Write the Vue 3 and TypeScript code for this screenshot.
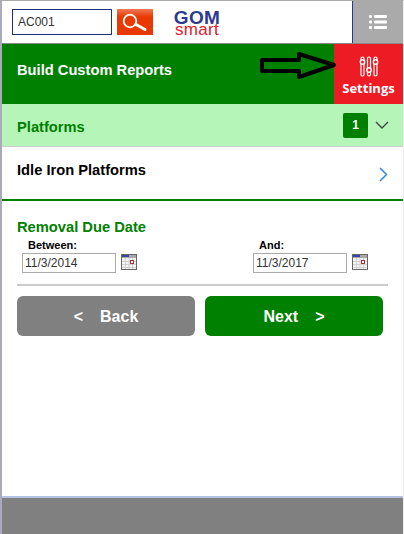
<script setup lang="ts">
interface DateField {
  label: string;
  value: string;
}

const dates: DateField[] = [
  { label: "Between:", value: "11/3/2014" },
  { label: "And:", value: "11/3/2017" },
];
</script>

<template>
  <div class="page">
    <header class="topbar">
      <input class="search-input" type="text" value="AC001" aria-label="Search" />
      <button class="search-btn" aria-label="Search">
        <svg width="26" height="22" viewBox="0 0 26 22" fill="none" aria-hidden="true">
          <circle cx="8" cy="10" r="6.3" stroke="#fff" stroke-width="1.8" />
          <path d="M14 13.5l9 5" stroke="#fff" stroke-width="3" stroke-linecap="round" />
        </svg>
      </button>
      <div class="logo">
        <span class="logo-gom">GOM</span>
        <span class="logo-smart">smart</span>
      </div>
      <button class="menu-btn" aria-label="Menu">
        <svg width="18" height="16" viewBox="0 0 18 16" fill="#fff" aria-hidden="true">
          <rect x="0" y="1" width="3" height="3" rx="1" />
          <rect x="5" y="1" width="13" height="3" rx="1" />
          <rect x="0" y="6.5" width="3" height="3" rx="1" />
          <rect x="5" y="6.5" width="13" height="3" rx="1" />
          <rect x="0" y="12" width="3" height="3" rx="1" />
          <rect x="5" y="12" width="13" height="3" rx="1" />
        </svg>
      </button>
    </header>

    <section class="title-bar">
      <h1 class="title">Build Custom Reports</h1>
      <div class="settings">
        <svg width="20" height="21" viewBox="0 0 20 21" fill="none" stroke="#fff" aria-hidden="true">
          <rect x="2" y="1" width="3" height="19" rx="1.5" stroke-width="1.2" />
          <rect x="8.5" y="1" width="3" height="19" rx="1.5" stroke-width="1.2" />
          <rect x="15" y="1" width="3" height="19" rx="1.5" stroke-width="1.2" />
          <circle cx="3.5" cy="6" r="2.2" fill="#ed1c24" stroke-width="1.4" />
          <circle cx="10" cy="14" r="2.2" fill="#ed1c24" stroke-width="1.4" />
          <circle cx="16.5" cy="6" r="2.2" fill="#ed1c24" stroke-width="1.4" />
        </svg>
        <span class="settings-label">Settings</span>
      </div>
      <svg class="callout" width="80" height="28" viewBox="0 0 80 28" fill="none" aria-hidden="true">
        <path
          d="M2 8H39V2L74 13 39 25V19H2Z"
          stroke="#000"
          stroke-width="4"
          stroke-linejoin="round"
        />
      </svg>
    </section>

    <section class="platforms-bar">
      <h2 class="platforms-title">Platforms</h2>
      <span class="badge">1</span>
      <svg class="chevron-down" width="14" height="9" viewBox="0 0 14 9" fill="none" aria-hidden="true">
        <path d="M1 1l6 6 6-6" stroke="#444" stroke-width="1.4" />
      </svg>
    </section>

    <a class="report-row">
      <span class="report-name">Idle Iron Platforms</span>
      <svg width="9" height="15" viewBox="0 0 9 15" fill="none" aria-hidden="true">
        <path d="M1 1l6.5 6.5L1 14" stroke="#2f86ea" stroke-width="1.5" />
      </svg>
    </a>

    <section class="due-date">
      <h3 class="due-title">Removal Due Date</h3>
      <div class="date-grid">
        <div v-for="field in dates" :key="field.label" class="date-field">
          <label class="date-label">{{ field.label }}</label>
          <div class="date-control">
            <input class="date-input" type="text" :value="field.value" :aria-label="field.label" />
            <svg class="calendar" width="16" height="16" viewBox="0 0 16 16" aria-hidden="true">
              <rect x="0.5" y="0.5" width="15" height="15" fill="#f4f4f4" stroke="#666" />
              <rect x="1" y="1" width="14" height="3" fill="#a8a8a8" />
              <rect x="1" y="1" width="7" height="2" fill="#3c46a8" />
              <path d="M1 7.5h14M1 10.5h14M1 13.5h14M4.5 4v11M8 4v11M11.5 4v11" stroke="#d0d0d0" />
              <rect x="9.5" y="6.5" width="3" height="3" fill="#fff" stroke="#a83232" />
            </svg>
          </div>
        </div>
      </div>
    </section>

    <div class="actions">
      <button class="action back"><span>&lt;</span><span>Back</span></button>
      <button class="action next"><span>Next</span><span>&gt;</span></button>
    </div>

    <footer class="footer"></footer>
  </div>
</template>

<style>
html,
body {
  margin: 0;
  background: #fff;
}
</style>

<style scoped>
.page {
  box-sizing: border-box;
  width: 404px;
  height: 534px;
  display: flex;
  flex-direction: column;
  overflow: hidden;
  position: relative;
  border-top: 1px solid #aaa;
  border-left: 2px solid #aab;
  border-right: 1px solid #eee;
  background: #fff;
  font-family: "Liberation Sans", Arial, sans-serif;
}

h1,
h2,
h3 {
  margin: 0;
}

/* Top bar */
.topbar {
  box-sizing: border-box;
  height: 43px;
  flex: none;
  display: flex;
  align-items: flex-start;
  padding-left: 10px;
  border-bottom: 1px solid #888;
}

.search-input {
  box-sizing: border-box;
  width: 100px;
  height: 26px;
  margin-top: 8px;
  padding: 0 5px;
  border: 1px solid #1f2f78;
  border-radius: 0;
  outline: none;
  color: #333;
  font: 12px "Liberation Sans", Arial, sans-serif;
}

.search-btn {
  width: 36px;
  height: 26px;
  margin: 8px 0 0 5px;
  padding: 0;
  display: flex;
  align-items: center;
  justify-content: center;
  border: none;
  background: linear-gradient(#f0785a, #e83a00 30%);
}

.logo {
  width: 46px;
  margin: 9px 0 0 21px;
  display: flex;
  flex-direction: column;
  align-items: center;
}

.logo-gom {
  color: #2b3990;
  font-size: 19px;
  font-weight: 700;
  letter-spacing: 0.3px;
  line-height: 15px;
}

.logo-smart {
  color: #e0202c;
  font-size: 17px;
  letter-spacing: 0.3px;
  line-height: 10px;
}

.menu-btn {
  box-sizing: border-box;
  width: 51px;
  height: 42px;
  margin-left: auto;
  padding: 0;
  display: flex;
  align-items: center;
  justify-content: center;
  border: none;
  border-left: 1px solid #2b3990;
  background: #aaa;
}

/* Title bar */
.title-bar {
  height: 60px;
  flex: none;
  display: flex;
  align-items: stretch;
  justify-content: space-between;
  position: relative;
  background: #008000;
}

.title {
  align-self: center;
  padding: 0 0 8px 15px;
  color: #fff;
  font-size: 14.7px;
  font-weight: 700;
}

.settings {
  width: 69px;
  padding-top: 12px;
  box-sizing: border-box;
  display: flex;
  flex-direction: column;
  align-items: center;
  gap: 2px;
  background: #ed1c24;
}

.settings-label {
  color: #fff;
  font-family: "Open Sans", sans-serif;
  font-size: 13px;
  font-weight: 700;
  line-height: 18px;
}

.callout {
  position: absolute;
  left: 258px;
  top: 8px;
}

/* Platforms */
.platforms-bar {
  box-sizing: border-box;
  height: 43px;
  flex: none;
  display: flex;
  align-items: center;
  padding: 1px 14px 0 15px;
  border-bottom: 1px solid #ccc;
  background: #b5f5b8;
}

.platforms-title {
  margin-right: auto;
  padding-top: 3px;
  color: #008000;
  font-size: 14.7px;
  font-weight: 700;
}

.badge {
  width: 25px;
  height: 25px;
  margin-right: 7px;
  border-radius: 2px;
  background: #008000;
  color: #fff;
  font-size: 12px;
  font-weight: 700;
  line-height: 25px;
  text-align: center;
}

.report-row {
  box-sizing: border-box;
  height: 54px;
  flex: none;
  display: flex;
  justify-content: space-between;
  padding: 15px 15px 0 15px;
  border-bottom: 2px solid #008000;
}

.report-name {
  color: #000;
  font-size: 14.7px;
  font-weight: 700;
  line-height: 17px;
}

.report-row svg {
  margin-top: 5px;
}

/* Dates */
.due-date {
  margin: 18px 15px 0;
  padding-bottom: 11px;
  border-bottom: 2px solid #ccc;
}

.due-title {
  color: #008000;
  font-size: 14.7px;
  font-weight: 700;
  line-height: 17px;
}

.date-grid {
  display: grid;
  grid-template-columns: 231px auto;
  margin: 2px 0 0 5px;
}

.date-label {
  display: block;
  margin-left: 6px;
  color: #000;
  font-size: 11px;
  font-weight: 700;
  line-height: 15px;
}

.date-control {
  display: flex;
  align-items: flex-start;
  gap: 5px;
}

.date-input {
  box-sizing: border-box;
  width: 94px;
  height: 20px;
  padding: 0 2px;
  border: 1px solid #aaa;
  border-radius: 0;
  outline: none;
  color: #333;
  font: 12px "Liberation Sans", Arial, sans-serif;
}

.calendar {
  margin-top: 1px;
}

/* Actions */
.actions {
  display: flex;
  gap: 10px;
  margin: 10px 15px 0;
  padding-right: 5px;
}

.action {
  flex: 1;
  height: 40px;
  display: flex;
  align-items: center;
  justify-content: center;
  gap: 17px;
  padding: 1px 0 0;
  border: none;
  border-radius: 6px;
  color: #fff;
  font: 700 16px "Liberation Sans", Arial, sans-serif;
}

.back {
  background: #808080;
}

.next {
  background: #008000;
}

.footer {
  box-sizing: border-box;
  height: 38px;
  flex: none;
  margin-top: auto;
  border-top: 2px solid #b4c0e4;
  background: #808080;
}
</style>
